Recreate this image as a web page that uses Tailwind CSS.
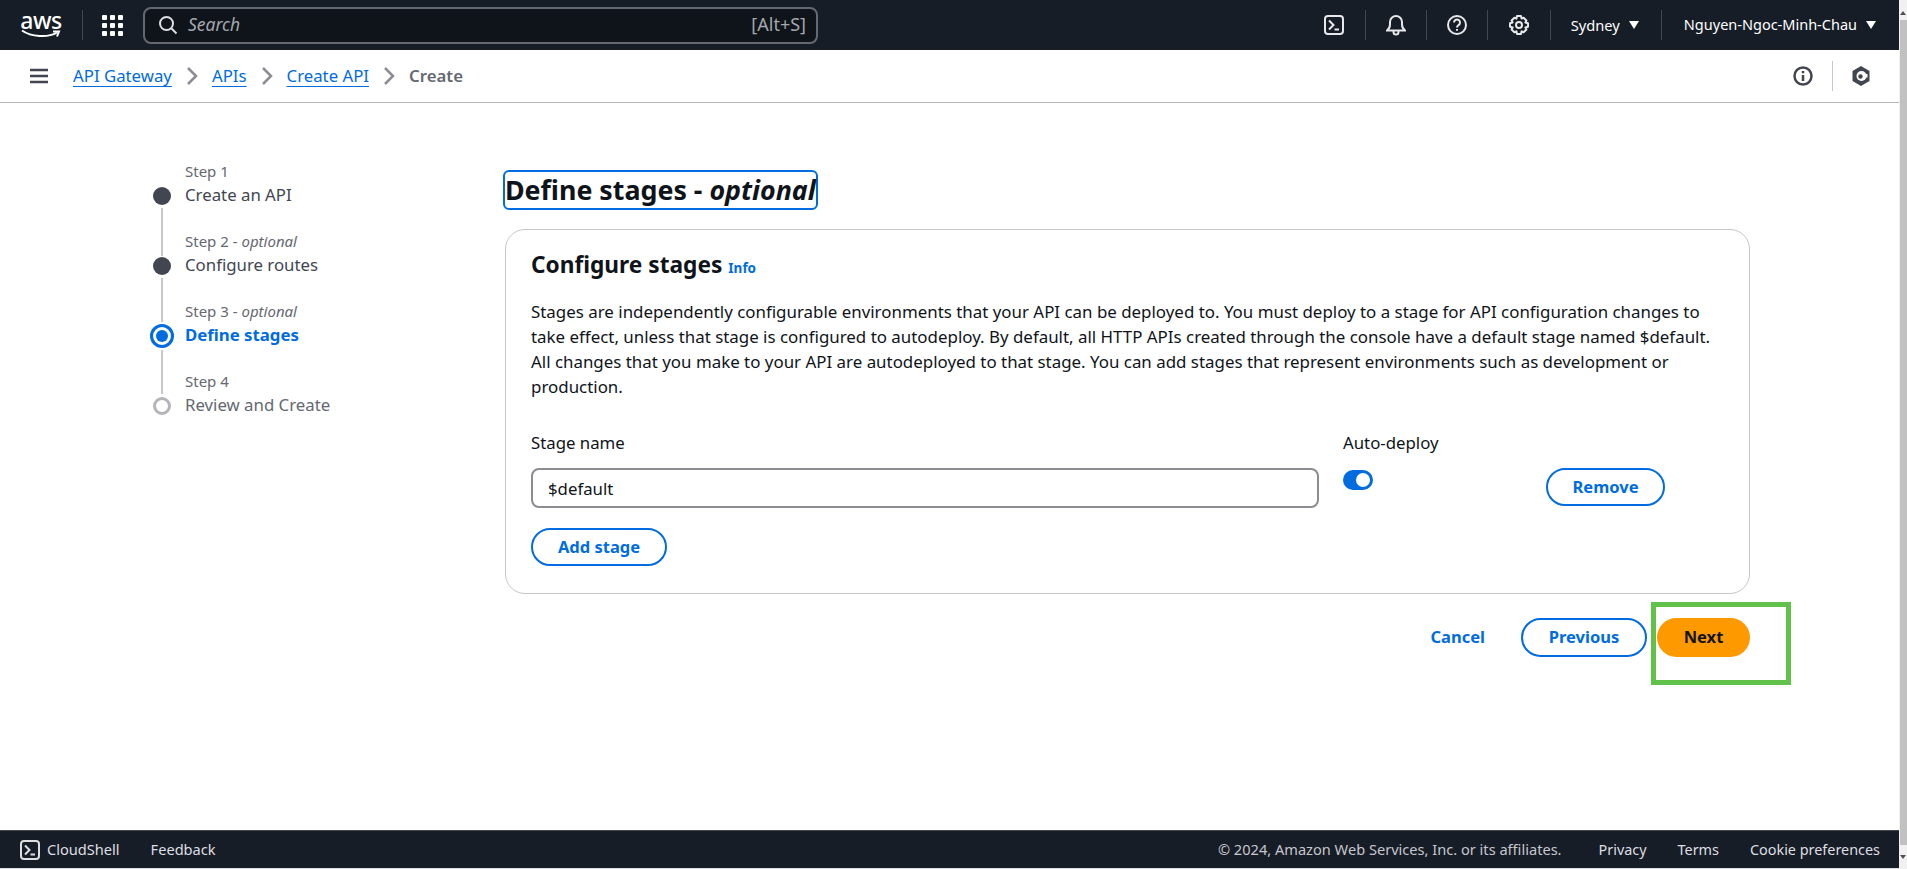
<!DOCTYPE html>
<html lang="en">
<head>
    <meta charset="UTF-8">
    <title>Create API - API Gateway</title>
    <script src="https://cdn.jsdelivr.net/npm/@tailwindcss/browser@4"></script>
</head>

<body class="bg-white font-['Noto_Sans',sans-serif] text-[#0f141a] overflow-hidden">
<div class="flex h-[869px] w-[1907px] overflow-hidden">
    <div class="relative flex flex-col w-[1899px] shrink-0">

        <!-- Top nav -->
        <header class="flex items-center h-[50px] shrink-0 bg-[#161d26] text-white">
            <div class="flex flex-col items-center w-[42px] ml-[20px] leading-none">
                <span class="text-[23px] leading-[18px] tracking-[-0.5px] font-medium">aws</span>
                <svg width="40" height="10" viewBox="0 0 40 10" fill="none" stroke="#fff" stroke-width="2">
                    <path d="M1 1.5C10 8 27 9 36 3.5"/>
                    <path d="M32 2.5h6l-2 5"/>
                </svg>
            </div>
            <div class="w-px h-[30px] bg-[#424650] ml-[20px]"></div>
            <svg class="ml-[19px]" width="21" height="21" viewBox="0 0 21 21" fill="#fff">
                <rect x="0" y="0" width="5" height="5" rx="1"/><rect x="8" y="0" width="5" height="5" rx="1"/><rect x="16" y="0" width="5" height="5" rx="1"/>
                <rect x="0" y="8" width="5" height="5" rx="1"/><rect x="8" y="8" width="5" height="5" rx="1"/><rect x="16" y="8" width="5" height="5" rx="1"/>
                <rect x="0" y="16" width="5" height="5" rx="1"/><rect x="8" y="16" width="5" height="5" rx="1"/><rect x="16" y="16" width="5" height="5" rx="1"/>
            </svg>
            <div class="flex items-center justify-between w-[675px] h-[37px] ml-[20px] pl-[13px] pr-[10px] rounded-[8px] border-2 border-[#656871] bg-[#0f141a]">
                <div class="flex items-center gap-[10px]">
                    <svg width="20" height="20" viewBox="0 0 20 20" fill="none" stroke="#dedee3" stroke-width="2">
                        <circle cx="8.5" cy="8.5" r="6.5"/><path d="M13.5 13.5l5 5"/>
                    </svg>
                    <span class="pb-[2px] text-[17.5px] italic text-[#a4a7ae]">Search</span>
                </div>
                <span class="pb-[2px] text-[18px] text-[#a4a7ae]">[Alt+S]</span>
            </div>

            <div class="flex items-center ml-auto">
                <svg width="20" height="20" viewBox="0 0 20 20" fill="none" stroke="#e8e8ec" stroke-width="2" class="mr-[21px]">
                    <rect x="1" y="1" width="18" height="18" rx="3"/><path d="M5 5.500l4.500 4.500L5 14.500M10.500 14.500h4.500"/>
                </svg>
                <div class="w-px h-[30px] bg-[#424650]"></div>
                <svg width="20" height="22" viewBox="0 0 20 22" fill="none" stroke="#e8e8ec" stroke-width="2" class="mx-[20px]">
                    <path d="M1 16.5c2-1.500 3-3 3-6V8a6 6 0 0 1 12 0v2.500c0 3 1 4.500 3 6z"/><path d="M7.500 17v1a2.500 2.500 0 0 0 5 0v-1"/>
                </svg>
                <div class="w-px h-[30px] bg-[#424650]"></div>
                <svg width="20" height="20" viewBox="0 0 20 20" fill="none" stroke="#e8e8ec" stroke-width="2" class="mx-[20px]">
                    <circle cx="10" cy="10" r="9"/><path d="M7 7.500a3 3 0 1 1 4.500 2.600c-1 .6-1.500 1.200-1.500 2.400"/><path d="M10 14v1.800"/>
                </svg>
                <div class="w-px h-[30px] bg-[#424650]"></div>
                <svg width="20" height="20" viewBox="0 0 20 20" fill="none" stroke="#e8e8ec" stroke-width="2" class="mx-[21px]">
                    <path d="M8 1h4l.6 2.600 2-.9 2.800 2.800-1 2 2.600.7v3.600l-2.600.7 1 2-2.800 2.800-2-1L12 19H8l-.6-2.700-2 1-2.800-2.800 1-2L1 11.800V8.200l2.600-.7-1-2 2.800-2.800 2 .9z" stroke-linejoin="round"/><circle cx="10" cy="10" r="3"/>
                </svg>
                <div class="w-px h-[30px] bg-[#424650]"></div>
                <span class="ml-[20px] text-[14.7px]">Sydney</span>
                <span class="ml-[9px] w-0 h-0 border-x-[5px] border-x-transparent border-t-[8px] border-t-white"></span>
                <div class="w-px h-[30px] bg-[#424650] ml-[22px]"></div>
                <span class="ml-[22px] text-[14.5px]">Nguyen-Ngoc-Minh-Chau</span>
                <span class="ml-[9px] mr-[23px] w-0 h-0 border-x-[5px] border-x-transparent border-t-[8px] border-t-white"></span>
            </div>
        </header>

        <!-- Breadcrumbs -->
        <nav class="flex items-center h-[53px] shrink-0 border-b border-[#b4b4bb] text-[16.8px]">
            <svg class="ml-[30px]" width="18" height="16" viewBox="0 0 18 16" fill="none" stroke="#424650" stroke-width="2.500">
                <path d="M0 2h18M0 8h18M0 14h18"/>
            </svg>
            <a class="ml-[25px] text-[#006ce0] underline underline-offset-4">API Gateway</a>
            <svg class="mx-[14px]" width="12" height="18" viewBox="0 0 12 18" fill="none" stroke="#8c8c94" stroke-width="2.500"><path d="M2 1l8 8-8 8"/></svg>
            <a class="text-[#006ce0] underline underline-offset-4">APIs</a>
            <svg class="mx-[14px]" width="12" height="18" viewBox="0 0 12 18" fill="none" stroke="#8c8c94" stroke-width="2.500"><path d="M2 1l8 8-8 8"/></svg>
            <a class="text-[#006ce0] underline underline-offset-4">Create API</a>
            <svg class="mx-[14px]" width="12" height="18" viewBox="0 0 12 18" fill="none" stroke="#8c8c94" stroke-width="2.500"><path d="M2 1l8 8-8 8"/></svg>
            <span class="font-semibold text-[#656871]">Create</span>

            <svg class="ml-auto" width="20" height="20" viewBox="0 0 20 20" fill="none" stroke="#424650" stroke-width="2.500">
                <circle cx="10" cy="10" r="8.500"/><path d="M10 9v6M10 5v2.200"/>
            </svg>
            <div class="w-px h-[30px] bg-[#c6c6cd] mx-[19px]"></div>
            <svg class="mr-[29px]" width="18" height="20" viewBox="0 0 18 20">
                <path d="M9 0l8.500 5v10L9 20 .5 15V5z" fill="#424650"/>
                <circle cx="9.500" cy="10" r="5" fill="#fff"/>
                <path d="M10 8h5.500v3.500H10z" fill="#fff"/>
                <circle cx="8.500" cy="10.500" r="2.200" fill="#424650"/>
            </svg>
        </nav>

        <!-- Content -->
        <main class="flex flex-1 min-h-0">
            <!-- Steps -->
            <ol class="w-[505px] shrink-0 pl-[151px] pt-[58px]">
                <li class="relative pl-[34px] h-[70px]">
                    <span class="absolute left-[2px] top-[26px] w-[18px] h-[18px] rounded-full bg-[#424650]"></span>
                    <span class="absolute left-[10px] top-[47px] w-[2px] h-[48px] bg-[#c6c6cd]"></span>
                    <p class="text-[15px] leading-[20px] text-[#656871]">Step 1</p>
                    <p class="text-[16.8px] leading-[28px] text-[#424650]">Create an API</p>
                </li>
                <li class="relative pl-[34px] h-[70px]">
                    <span class="absolute left-[2px] top-[26px] w-[18px] h-[18px] rounded-full bg-[#424650]"></span>
                    <span class="absolute left-[10px] top-[47px] w-[2px] h-[44px] bg-[#c6c6cd]"></span>
                    <p class="text-[15px] leading-[20px] text-[#656871]">Step 2 - <i>optional</i></p>
                    <p class="text-[16.8px] leading-[28px] text-[#424650]">Configure routes</p>
                </li>
                <li class="relative pl-[34px] h-[70px]">
                    <span class="absolute left-[-1px] top-[23px] w-[24px] h-[24px] rounded-full border-[3px] border-[#006ce0] flex items-center justify-center">
                        <span class="w-[12px] h-[12px] rounded-full bg-[#006ce0]"></span>
                    </span>
                    <span class="absolute left-[10px] top-[49px] w-[2px] h-[44px] bg-[#c6c6cd]"></span>
                    <p class="text-[15px] leading-[20px] text-[#656871]">Step 3 - <i>optional</i></p>
                    <p class="text-[16.8px] leading-[28px] font-bold text-[#006ce0]">Define stages</p>
                </li>
                <li class="relative pl-[34px] h-[70px]">
                    <span class="absolute left-[2px] top-[26px] w-[18px] h-[18px] rounded-full border-[3px] border-[#b4b4bb] bg-white"></span>
                    <p class="text-[15px] leading-[20px] text-[#656871]">Step 4</p>
                    <p class="text-[16.8px] leading-[28px] text-[#656871]">Review and Create</p>
                </li>
            </ol>

            <!-- Form -->
            <section class="w-[1245px] shrink-0 pt-[67px]">
                <h1 class="inline-block ml-[-2px] h-[40px] border-2 border-[#006ce0] rounded-[6px] text-[26.8px] leading-[35px] font-bold whitespace-nowrap">Define stages - <i>optional</i></h1>

                <div class="mt-[19px] h-[365px] border border-[#c6c6cd] rounded-[20px] pl-[25px] pr-[24px] pt-[20px]">
                    <div class="flex items-baseline gap-[6px]">
                        <h2 class="text-[22.7px] leading-[30px] font-bold">Configure stages</h2>
                        <a class="text-[13.5px] font-bold text-[#006ce0]">Info</a>
                    </div>
                    <p class="mt-[19px] text-[16.9px] leading-[25px] whitespace-nowrap">Stages are independently configurable environments that your API can be deployed to. You must deploy to a stage for API configuration changes to<br>take effect, unless that stage is configured to autodeploy. By default, all HTTP APIs created through the console have a default stage named $default.<br>All changes that you make to your API are autodeployed to that stage. You can add stages that represent environments such as development or<br>production.</p>

                    <div class="flex mt-[32px]">
                        <div class="w-[788px]">
                            <label class="block text-[16.8px] leading-[24px]">Stage name</label>
                            <input type="text" value="$default" class="block mt-[13px] w-full h-[40px] px-[15px] border-2 border-[#8c8c94] rounded-[8px] text-[16.8px] text-[#0f141a]">
                        </div>
                        <div class="w-[203px] ml-[24px]">
                            <div class="text-[16.8px] leading-[24px]">Auto-deploy</div>
                            <div class="relative mt-[15px] w-[30px] h-[20px] rounded-full bg-[#006ce0]">
                                <span class="absolute right-[3px] top-[3px] w-[14px] h-[14px] rounded-full bg-white"></span>
                            </div>
                        </div>
                        <button class="self-end w-[119px] h-[38px] mb-[2px] rounded-full border-2 border-[#006ce0] text-[16.5px] font-bold text-[#006ce0]">Remove</button>
                    </div>
                    <button class="block mt-[20px] w-[136px] h-[38px] rounded-full border-2 border-[#006ce0] text-[16.5px] font-bold text-[#006ce0]">Add stage</button>
                </div>

                <div class="flex items-center justify-end mt-[24px]">
                    <a class="text-[16.5px] font-bold text-[#006ce0] mr-[36px]">Cancel</a>
                    <button class="w-[126px] h-[39px] rounded-full border-2 border-[#006ce0] text-[16.5px] font-bold text-[#006ce0]">Previous</button>
                    <button class="ml-[10px] w-[93px] h-[39px] rounded-full bg-[#ff9900] text-[16.5px] font-bold text-[#0f141a]">Next</button>
                </div>
            </section>
        </main>

        <!-- Annotation from the screenshot -->
        <div class="absolute left-[1651px] top-[602px] w-[140px] h-[83px] border-[5px] border-[#62c14a]"></div>

        <!-- Footer -->
        <footer class="flex items-center h-[38px] shrink-0 bg-[#161d26] border-t border-[#424650] text-[14.4px] text-[#dedee3]">
            <svg class="ml-[20px]" width="20" height="20" viewBox="0 0 20 20" fill="none" stroke="#dedee3" stroke-width="2">
                <rect x="1" y="1" width="18" height="18" rx="3"/><path d="M5 5.500l4.500 4.500L5 14.500M10.500 14.500h4.500"/>
            </svg>
            <span class="ml-[7px] text-[14.6px]">CloudShell</span>
            <span class="ml-[31px] text-[14.6px]">Feedback</span>
            <span class="ml-auto text-[14.6px] text-[#c6c6cd]">© 2024, Amazon Web Services, Inc. or its affiliates.</span>
            <span class="ml-[37px]">Privacy</span>
            <span class="ml-[31px]">Terms</span>
            <span class="ml-[31px] mr-[19px]">Cookie preferences</span>
        </footer>
        <div class="h-px shrink-0 bg-[#dedee3]"></div>
    </div>

    <!-- Scrollbar -->
    <div class="relative w-2 shrink-0 bg-[#f1f1f1]">
        <div class="absolute left-[1px] top-[20px] w-[7px] h-[825px] bg-[#c1c1c1]"></div>
        <span class="absolute left-[1px] top-[11px] w-0 h-0 border-x-[3px] border-x-transparent border-b-[4px] border-b-[#505050]"></span>
        <span class="absolute left-[1px] top-[855px] w-0 h-0 border-x-[3px] border-x-transparent border-t-[4px] border-t-[#505050]"></span>
    </div>
</div>
</body>
</html>
